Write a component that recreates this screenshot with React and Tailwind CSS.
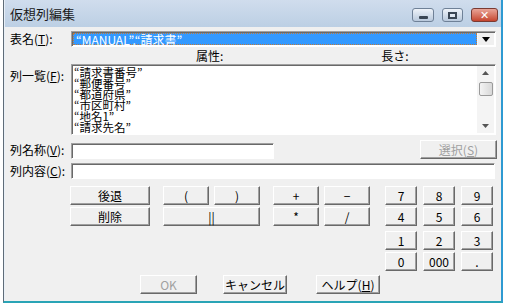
const raised =
  'flex items-center justify-center h-[19px] bg-[#f0f0f0] border border-t-white border-l-white border-r-[#696969] border-b-[#696969] shadow-[inset_-1px_-1px_0_#a0a0a0] text-[12px] leading-none'

function Btn({ w, ml, children, disabled }) {
  return (
    <div
      className={`${raised} shrink-0 ${disabled ? 'text-[#a0a0a0]' : 'text-black'}`}
      style={{ width: w, marginLeft: ml }}
    >
      {children}
    </div>
  )
}

function U({ children }) {
  return <span className="underline">{children}</span>
}

const sunken =
  'bg-white border border-t-[#a0a0a0] border-l-[#a0a0a0] border-r-white border-b-white shadow-[inset_1px_1px_0_#696969]'

const items = ['“請求書番号”', '“郵便番号”', '“都道府県”', '“市区町村”', '“地名1”', '“請求先名”']

export default function App() {
  return (
    <div className="w-[505px] h-[308px] bg-white font-['Noto_Sans_CJK_JP','Liberation_Sans',sans-serif] text-[12px] text-black">
      <div className="ml-[3px] w-[500px] h-[303px] flex flex-col border-l border-l-[#5f6c78] border-r-2 border-r-[#2e9ad2] border-b-2 border-b-[#2aa4b6]">
        {/* title bar */}
        <div className="h-[27px] flex items-center bg-gradient-to-b from-[#d0dded] to-[#bccfe4] border-l border-l-[#e6eef7]">
          <span className="ml-[5px] text-[13px] leading-none text-[#1a1a1a]">仮想列編集</span>
          <div className="ml-auto mr-[3px] flex items-center gap-[8px] mt-[3px]">
            <div className="w-[22px] h-[14px] rounded-[3px] border border-[#6f8197] bg-gradient-to-b from-[#eef3f9] to-[#b9c9dc] flex items-center justify-center">
              <div className="w-[9px] h-[3px] bg-[#3a4654] mt-[4px] rounded-[1px]" />
            </div>
            <div className="w-[21px] h-[14px] rounded-[3px] border border-[#6f8197] bg-gradient-to-b from-[#eef3f9] to-[#b9c9dc] flex items-center justify-center">
              <div className="w-[9px] h-[7px] border-2 border-[#3a4654] bg-[#dfe7f1]" />
            </div>
            <div className="w-[27px] h-[14px] rounded-[3px] border border-[#7a3a32] bg-gradient-to-b from-[#e8a497] to-[#c5442e] flex items-center justify-center text-white text-[11px] font-bold leading-none font-['DejaVu_Sans',sans-serif]">
              ✕
            </div>
          </div>
        </div>

        {/* body */}
        <div className="flex-1 bg-[#f0f0f0] border-l border-l-[#e9f0f7] pl-[5px] flex flex-col">
          {/* 表名 */}
          <div className="mt-[4px] flex items-center h-[16px]">
            <span className="w-[61px] shrink-0">表名(<U>T</U>):</span>
            <div className={`w-[425px] h-[16px] flex ${sunken} p-[1px]`}>
              <div className="flex-1 bg-[#3399ff] text-white leading-[12px] pl-[2px] border border-dotted border-[#c07a3a]">
                “MANUAL”.“請求書”
              </div>
              <div className="w-[17px] flex items-center justify-center bg-[#f0f0f0] border-l border-[#f7f7f7]">
                <svg width="8" height="5" viewBox="0 0 8 5">
                  <path d="M0 0H8L4 5Z" fill="#000" />
                </svg>
              </div>
            </div>
          </div>

          {/* header */}
          <div className="h-[17px] flex items-center">
            <span className="ml-[186px]">属性:</span>
            <span className="ml-[158px]">長さ:</span>
          </div>

          {/* list */}
          <div className="flex">
            <span className="w-[61px] shrink-0 mt-[3px]">列一覧(<U>F</U>):</span>
            <div className={`w-[425px] h-[71px] flex ${sunken}`}>
              <div className="flex-1 pl-[2px] pt-[2px] text-[11.5px] leading-[11px] overflow-hidden">
                {items.map((it) => (
                  <div key={it}>{it}</div>
                ))}
              </div>
              <div className="w-[17px] mr-[1px] my-[1px] bg-[#f4f4f4] flex flex-col items-center">
                <svg width="7" height="4" viewBox="0 0 7 4" className="mt-[5px]">
                  <path d="M0 4H7L3.5 0Z" fill="#555" />
                </svg>
                <div className="mt-[7px] w-[14px] h-[14px] rounded-[2px] border border-[#9a9a9a] bg-gradient-to-r from-[#f4f4f4] to-[#d8d8d8]" />
                <svg width="7" height="4" viewBox="0 0 7 4" className="mt-auto mb-[5px]">
                  <path d="M0 0H7L3.5 4Z" fill="#555" />
                </svg>
              </div>
            </div>
          </div>

          {/* 列名称 */}
          <div className="mt-[5px] flex items-end h-[19px]">
            <span className="w-[61px] shrink-0 self-center">列名称(<U>V</U>):</span>
            <div className={`w-[203px] h-[16px] ${sunken}`} />
            <Btn w={77} ml={146} disabled>
              選択(<U>S</U>)
            </Btn>
          </div>

          {/* 列内容 */}
          <div className="mt-[4px] flex items-center h-[16px]">
            <span className="w-[61px] shrink-0">列内容(<U>C</U>):</span>
            <div className={`w-[424px] h-[16px] ${sunken}`} />
          </div>

          {/* keypad */}
          <div className="mt-[7px] flex">
            <Btn w={80} ml={60}>後退</Btn>
            <Btn w={46} ml={13}>(</Btn>
            <Btn w={46} ml={5}>)</Btn>
            <Btn w={46} ml={13}>+</Btn>
            <Btn w={46} ml={5}>−</Btn>
            <Btn w={32} ml={15}>7</Btn>
            <Btn w={32} ml={6}>8</Btn>
            <Btn w={32} ml={6}>9</Btn>
          </div>
          <div className="mt-[2px] flex">
            <Btn w={80} ml={60}>削除</Btn>
            <Btn w={97} ml={13}>||</Btn>
            <Btn w={46} ml={13}>*</Btn>
            <Btn w={46} ml={5}>/</Btn>
            <Btn w={32} ml={15}>4</Btn>
            <Btn w={32} ml={6}>5</Btn>
            <Btn w={32} ml={6}>6</Btn>
          </div>
          <div className="mt-[5px] flex">
            <Btn w={32} ml={375}>1</Btn>
            <Btn w={32} ml={6}>2</Btn>
            <Btn w={32} ml={6}>3</Btn>
          </div>
          <div className="mt-[2px] flex">
            <Btn w={32} ml={375}>0</Btn>
            <Btn w={32} ml={6}>000</Btn>
            <Btn w={32} ml={6}>.</Btn>
          </div>
          <div className="mt-[4px] flex">
            <Btn w={57} ml={130} disabled>OK</Btn>
            <Btn w={64} ml={26}>キャンセル</Btn>
            <Btn w={64} ml={29}>ヘルプ(<U>H</U>)</Btn>
          </div>
        </div>
      </div>
    </div>
  )
}
